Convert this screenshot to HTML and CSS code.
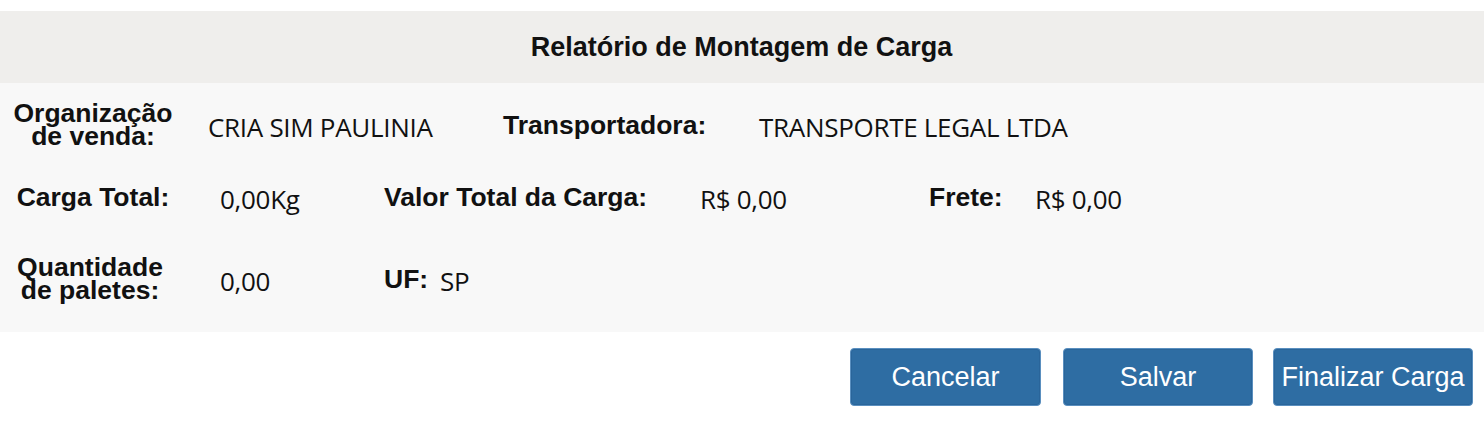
FILE: index.html
```html
<!DOCTYPE html>
<html>
    <head>
        <title>Relatório de Montagem de Carga</title>
        <link rel="stylesheet" href="styles.css">
    </head>
    <body>
        <div class = "report">
            <div class = "report_header">
                <h2>Relatório de Montagem de Carga</h2>
            </div>
            <div class = "report_body">
                <div class = "row row_first">
                    <div class = "label label_main">Organização<br>de venda:</div>
                    <div class = "value value_org">CRIA SIM PAULINIA</div>
                    <div class = "label label_carrier">Transportadora:</div>
                    <div class = "value">TRANSPORTE LEGAL LTDA</div>
                </div>
                <div class = "row row_second">
                    <div class = "label label_main">Carga Total:</div>
                    <div class = "value value_weight">0,00Kg</div>
                    <div class = "label label_total">Valor Total da Carga:</div>
                    <div class = "value value_total">R$ 0,00</div>
                    <div class = "label label_freight">Frete:</div>
                    <div class = "value">R$ 0,00</div>
                </div>
                <div class = "row row_third">
                    <div class = "label label_main label_pallets">Quantidade<br>de paletes:</div>
                    <div class = "value value_weight">0,00</div>
                    <div class = "label label_uf">UF:</div>
                    <div class = "value">SP</div>
                </div>
            </div>
            <div class = "actions">
                <button class = "btn btn_cancel">Cancelar</button>
                <button class = "btn btn_save">Salvar</button>
                <button class = "btn btn_finish">Finalizar Carga</button>
            </div>
        </div>
    </body>
</html>
```

FILE: styles.css
```css
html, body {
    margin: 0;      padding: 0;
    background-color: #FFFFFF;
    color: #111111;
    font-family: "Liberation Sans", Arial, sans-serif;

    --header-bg:    #EFEEEC;
    --body-bg:      #F8F8F8;
    --btn-normal:   #2E6DA3;
    --btn-border:   #5A8FBF;
}

.report {
    padding-top: 11px;
}

/* Header */
.report_header {
    height: 72px;
    display: flex;
    align-items: center;
    justify-content: center;
    background-color: var(--header-bg);
}
.report_header h2 {
    margin: 0;
    font-size: 27px;
    font-weight: bold;
    color: #111111;
    padding-right: 1px;
}

/* Body */
.report_body {
    background-color: var(--body-bg);
    padding: 12px 0 23px 0;
}

.row {
    display: flex;
    align-items: center;
    height: 60px;
}
.row_second { margin-top: 12px; }
.row_third  { margin-top: 22px; }

.label {
    font-size: 26.5px;
    font-weight: bold;
    line-height: 23px;
    color: #111111;
}
.label_main {
    width: 186px;
    text-align: center;
}
.label_pallets {
    width: 180px;
    margin-right: 6px;
}
.label_carrier  { width: 256px; }
.label_total    { width: 316px; }
.label_freight  { width: 106px; }
.label_uf       { width: 56px; }

.value {
    font-family: "Open Sans", sans-serif;
    font-size: 26px;
    letter-spacing: -0.3px;
    color: #111111;
    padding-top: 3px;
}
.value_org      { width: 295px; margin-left: 22px; }
.value_weight   { width: 164px; margin-left: 34px; }
.value_total    { width: 229px; }

/* Buttons */
.actions {
    display: flex;
    justify-content: flex-end;
    gap: 22px;
    padding: 16px 11px 0 0;
}
.btn {
    height: 58px;
    padding: 0;
    color: #FFFFFF;
    background-color: var(--btn-normal);
    border: solid 1px var(--btn-border);
    border-radius: 4px;
    box-shadow: inset 0 0 0 1px #2A659A;
    font-family: "Liberation Sans", Arial, sans-serif;
    font-size: 27px;
    cursor: pointer;
}
.btn_cancel { width: 191px; }
.btn_save   { width: 190px; }
.btn_finish { width: 200px; margin-left: -2px; }
```
